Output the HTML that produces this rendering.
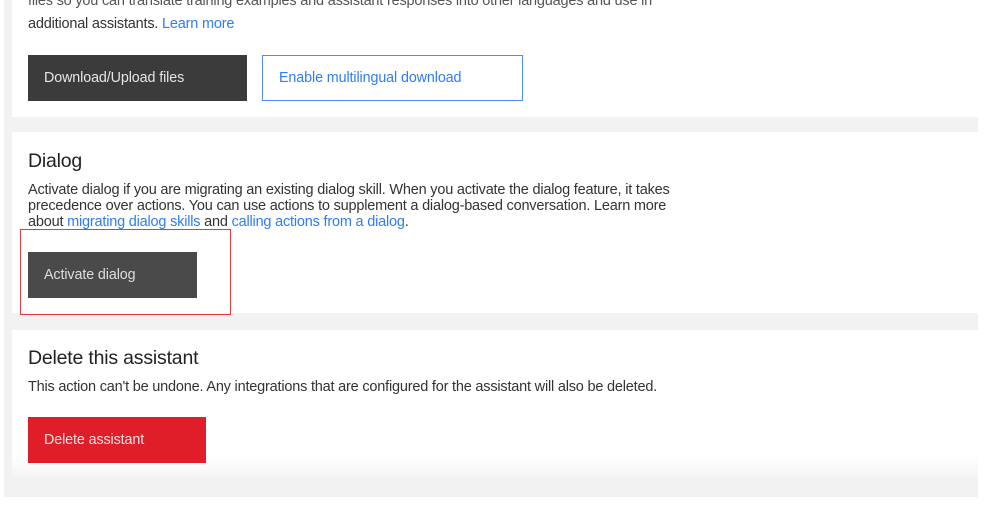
<!DOCTYPE html>
<html><head><style>
body{margin:0;width:995px;height:505px;background:#fff;position:relative;overflow:hidden;font-family:"Liberation Sans",sans-serif;color:#333;}
.bg{position:absolute;left:4px;top:0;width:974px;height:497px;background:#f2f2f2;}
.card{position:absolute;left:12px;width:966px;background:#fff;}
.t{position:absolute;font-size:14.5px;line-height:16px;letter-spacing:-0.2px;white-space:nowrap;}
a{color:#2f7cf6;text-decoration:none;}
.btn{position:absolute;font-size:14.3px;box-sizing:border-box;padding-left:16px;display:flex;align-items:center;letter-spacing:-0.1px;}
h2{position:absolute;margin:0;font-weight:normal;font-size:19.5px;color:#222;letter-spacing:-0.2px;}
</style></head><body>
<div class="bg"></div>
<div class="card" style="top:0;height:117px;"></div>
<div class="card" style="top:132px;height:181px;"></div>
<div class="card" style="top:330px;height:148px;background:linear-gradient(#fff 85%,#f4f4f4);"></div>

<div class="t" style="left:28px;top:-7px;color:#555">files so you can translate training examples and assistant responses into other languages and use in</div>
<div class="t" style="left:28px;top:16px;">additional assistants. <a>Learn more</a></div>
<div class="btn" style="left:28px;top:55px;width:219px;height:46px;background:#3b3b3b;color:#e6e6e6;">Download/Upload files</div>
<div class="btn" style="left:262px;top:55px;width:261px;height:46px;border:1.5px solid #4d8ef7;color:#2f7cf6;">Enable multilingual download</div>

<h2 style="left:28px;top:150px;">Dialog</h2>
<div class="t" style="left:28px;top:182px;">Activate dialog if you are migrating an existing dialog skill. When you activate the dialog feature, it takes</div>
<div class="t" style="left:28px;top:198px;">precedence over actions. You can use actions to supplement a dialog-based conversation. Learn more</div>
<div class="t" style="left:28px;top:214px;">about <a>migrating dialog skills</a> and <a>calling actions from a dialog</a>.</div>
<div style="position:absolute;left:20px;top:229px;width:211px;height:86px;border:1.5px solid #e8383d;box-sizing:border-box;"></div>
<div class="btn" style="left:28px;top:252px;width:169px;height:46px;background:#4a4a4a;color:#ddd;">Activate dialog</div>

<h2 style="left:28px;top:347px;">Delete this assistant</h2>
<div class="t" style="left:28px;top:379px;">This action can't be undone. Any integrations that are configured for the assistant will also be deleted.</div>
<div class="btn" style="left:28px;top:417px;width:178px;height:46px;background:#e01e2a;color:#fbe0e0;">Delete assistant</div>
</body></html>
